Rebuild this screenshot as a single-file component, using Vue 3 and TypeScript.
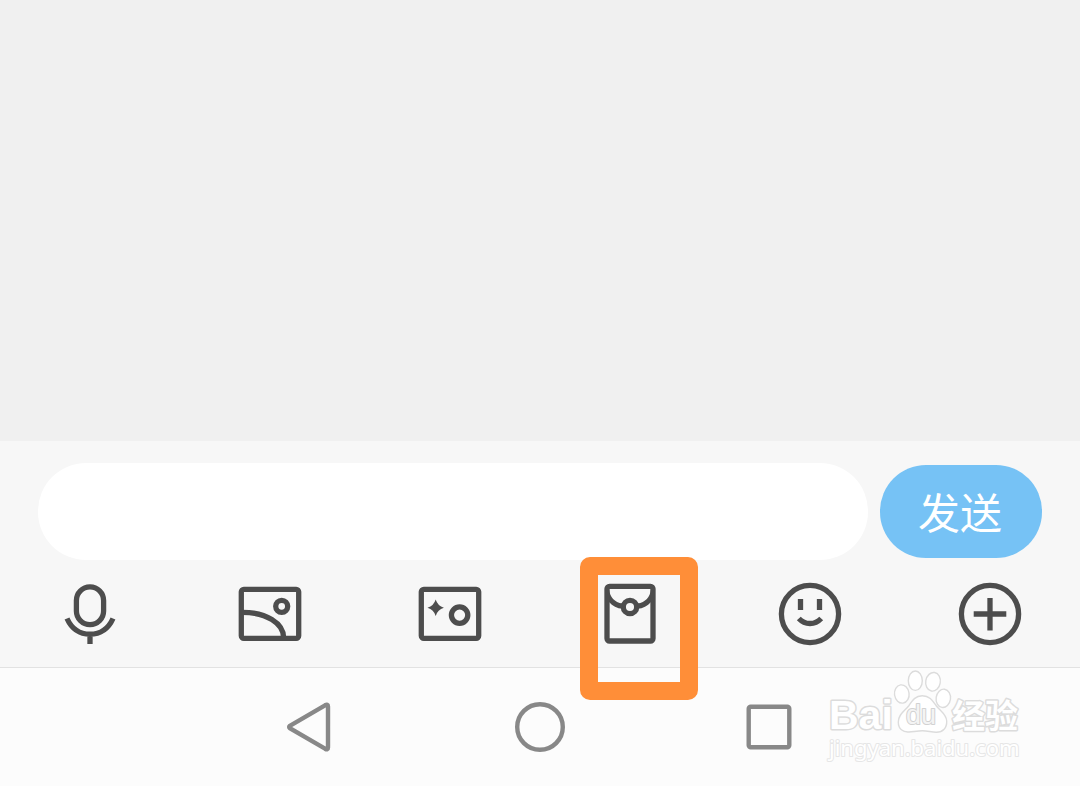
<script setup lang="ts">
import { ref } from 'vue'

type Tool = 'voice' | 'album' | 'camera' | 'packet' | 'emoji' | 'more'

const tools: { id: Tool; label: string }[] = [
  { id: 'voice', label: '语音' },
  { id: 'album', label: '图片' },
  { id: 'camera', label: '拍摄' },
  { id: 'packet', label: '红包' },
  { id: 'emoji', label: '表情' },
  { id: 'more', label: '更多' },
]
const highlighted: Tool = 'packet'
const message = ref('')
</script>

<template>
  <div class="screen">
    <main class="chat"></main>

    <section class="composer">
      <form class="entry" @submit.prevent="message = ''">
        <input v-model="message" class="field" type="text" aria-label="消息" />
        <button class="send" type="submit">发送</button>
      </form>

      <div class="tools">
        <button v-for="tool in tools" :key="tool.id" class="tool" type="button" :aria-label="tool.label">
          <svg class="icon" viewBox="0 0 72 72" aria-hidden="true">
            <g v-if="tool.id === 'voice'">
              <rect x="22.4" y="8.8" width="27.2" height="37.8" rx="13.6" />
              <path d="M13 40.5C17.5 50.5 25.5 56.2 36 56.2S54.5 50.5 59 40.5M36 56V66" />
            </g>
            <g v-else-if="tool.id === 'album'">
              <rect x="7.3" y="11.3" width="57.4" height="49" rx="2.5" />
              <circle cx="47.7" cy="28.3" r="6" />
              <path d="M8 34.3C32 34.3 49.7 45 49.7 60" />
            </g>
            <g v-else-if="tool.id === 'camera'">
              <rect x="7.3" y="11.3" width="57.4" height="49" rx="2.5" />
              <circle cx="45.6" cy="37.1" r="8.2" />
              <path class="solid" d="M21.7 21.5Q23.6 27.8 29.9 29.7Q23.6 31.6 21.7 37.9Q19.8 31.6 13.5 29.7Q19.8 27.8 21.7 21.5Z" />
            </g>
            <g v-else-if="tool.id === 'packet'">
              <rect x="13" y="8.3" width="46" height="54.7" rx="2.5" />
              <circle cx="36" cy="29" r="6.7" />
              <path class="solid" d="M15 11C16 19.5 20.5 24.3 28.5 25.5V30.8C23 30.4 18.5 28.3 15 24ZM57 11C56 19.5 51.5 24.3 43.5 25.5V30.8C49 30.4 53.500 28.3 57 24Z" />
            </g>
            <g v-else-if="tool.id === 'emoji'">
              <circle cx="36" cy="36" r="28.6" />
              <path d="M26.5 21V32M45.5 21V32M24.8 40.5Q29.5 45.5 36 45.5T47.2 40.5" />
            </g>
            <g v-else>
              <circle cx="36" cy="36" r="28.6" />
              <path d="M36 20V52.5M19.7 36H52.3" />
            </g>
          </svg>
          <span v-if="tool.id === highlighted" class="marker"></span>
        </button>
      </div>
    </section>

    <nav class="system">
      <button class="key" type="button" aria-label="返回">
        <svg viewBox="0 0 60 60" aria-hidden="true">
          <path d="M9.8 28.8L45 8.3Q48 6.7 48 9.5V50.5Q48 53.3 45 51.7L9.8 31.2Q8.5 30 9.8 28.8Z" />
        </svg>
      </button>
      <button class="key" type="button" aria-label="主页">
        <svg viewBox="0 0 60 60" aria-hidden="true"><circle cx="30" cy="30" r="22.8" /></svg>
      </button>
      <button class="key" type="button" aria-label="最近任务">
        <svg viewBox="0 0 60 60" aria-hidden="true"><rect x="8.7" y="9.7" width="40.6" height="40.6" rx="2" /></svg>
      </button>

      <svg class="watermark" viewBox="0 0 200 100" aria-label="Baidu 经验">
        <text class="latin" x="3" y="61">Bai</text>
        <ellipse cx="89.3" cy="12.7" rx="7" ry="9.7" />
        <ellipse cx="107" cy="13.8" rx="7.3" ry="9.4" transform="rotate(10 107 13.8)" />
        <ellipse cx="75.8" cy="26" rx="7.3" ry="9.2" transform="rotate(-8 75.8 26)" />
        <ellipse cx="117.3" cy="30.3" rx="7.2" ry="9.2" transform="rotate(8 117.3 30.3)" />
        <path d="M96.3 27.8C89 27.8 86 33 83 37.5C79 43 72.3 46 72.3 54C72.3 61 77 64.5 83 64C88 63.6 92 62.8 96.5 62.8S105 64 110 64.3C117 64.5 121 60 120.7 53C120.4 46 114 43 110 37.5C106.5 32.500 103.5 27.8 96.3 27.8Z" />
        <text class="du" x="80" y="56">du</text>
        <text class="han" x="126" y="60">经验</text>
        <text class="site" x="3" y="88">jingyan.baidu.com</text>
      </svg>
    </nav>
  </div>
</template>

<style>
body {
  margin: 0;
}
</style>

<style scoped>
.screen {
  display: flex;
  flex-direction: column;
  min-height: 100vh;
  background: #f0f0f0;
  font-family: "Liberation Sans", "Noto Sans CJK SC", sans-serif;
}

.chat {
  flex: 1;
}

.composer {
  background: #f7f7f7;
  border-bottom: 1px solid #e2e2e2;
}

.entry {
  display: flex;
  align-items: center;
  gap: 12px;
  padding: 22px 38px 0;
}

.field {
  flex: 1;
  min-width: 0;
  height: 97px;
  box-sizing: border-box;
  padding: 0 40px;
  border: 0;
  border-radius: 48px;
  outline: 0;
  background: #fff;
  color: #333;
  font: 42px "Liberation Sans", "Noto Sans CJK SC", sans-serif;
}

.send {
  width: 162px;
  height: 93px;
  padding: 0 2px 2px 0;
  border: 0;
  border-radius: 46px;
  background: #76c2f5;
  color: #fff;
  font: 42px "Noto Sans CJK SC", sans-serif;
}

.tools {
  display: grid;
  grid-template-columns: repeat(6, 1fr);
}

.tool {
  position: relative;
  display: flex;
  align-items: center;
  justify-content: center;
  height: 107px;
  padding: 0;
  border: 0;
  background: none;
}

.icon {
  width: 72px;
  height: 72px;
  fill: none;
  stroke: #4d4d4d;
  stroke-width: 5.3;
}

.icon .solid {
  fill: #4d4d4d;
  stroke: none;
}

.marker {
  position: absolute;
  z-index: 1;
  top: -3px;
  left: calc(50% - 50px);
  width: 118px;
  height: 143px;
  box-sizing: border-box;
  border: 18px solid #ff8e38;
  border-radius: 10px;
}

.system {
  position: relative;
  display: flex;
  align-items: center;
  justify-content: center;
  gap: 170px;
  height: 118px;
  background: #fcfcfc;
}

.key {
  width: 60px;
  height: 60px;
  padding: 0;
  border: 0;
  background: none;
}

.key svg {
  display: block;
  fill: none;
  stroke: #888;
  stroke-width: 4.4;
}

.watermark {
  position: absolute;
  top: 0;
  right: 54px;
  width: 200px;
  height: 100px;
  fill: #fff;
  stroke: #dcdcdc;
  stroke-width: 1.4;
}

.watermark text {
  paint-order: stroke;
  stroke-width: 3;
  stroke-linejoin: round;
}

.watermark .latin {
  font: bold 41px "Liberation Sans", sans-serif;
}

.watermark .du {
  fill: #f4f4f4;
  stroke: #d2d2d2;
  stroke-width: 2;
  font: 27px "Liberation Sans", sans-serif;
}

.watermark .han {
  font: bold 33px "Noto Sans CJK SC", sans-serif;
}

.watermark .site {
  stroke: #e6e6e6;
  stroke-width: 2;
  font: 22px "Noto Sans", sans-serif;
}
</style>
